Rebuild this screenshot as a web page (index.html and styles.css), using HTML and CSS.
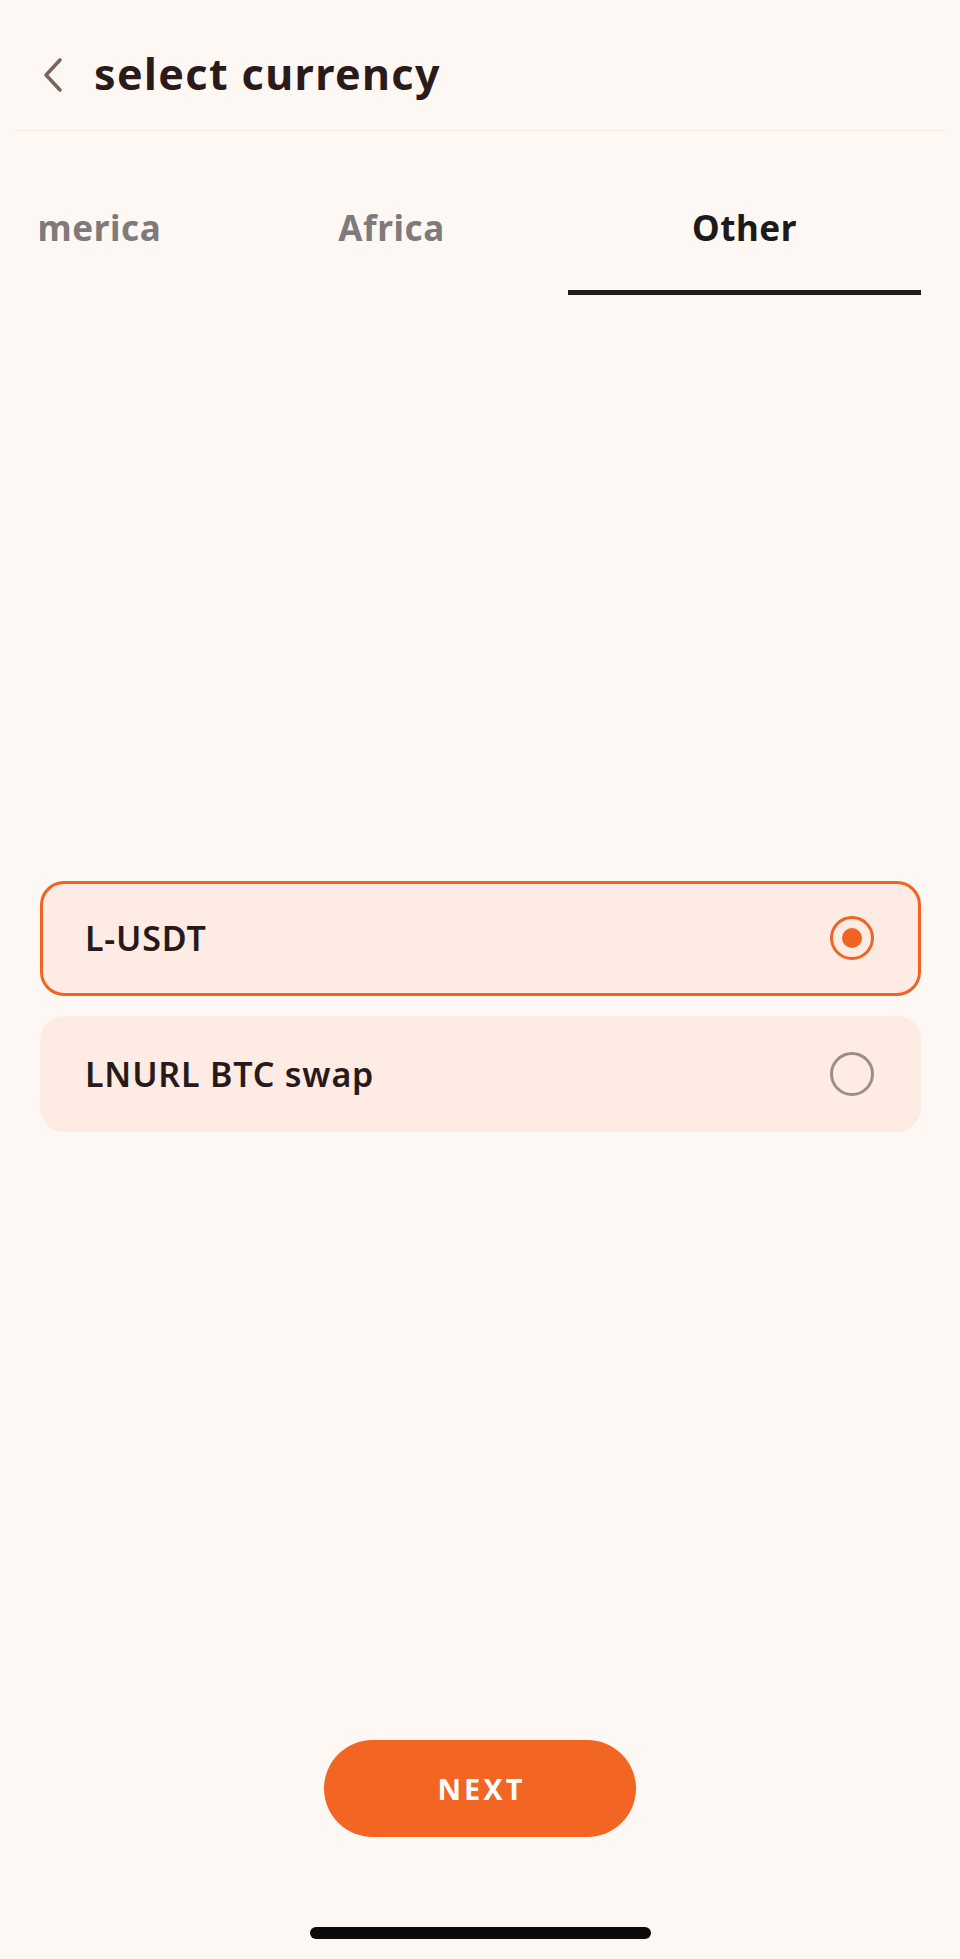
FILE: index.html
```html
<!DOCTYPE html>
<html lang="en">
<head>
<meta charset="utf-8">
<title>select currency</title>
<link rel="stylesheet" href="styles.css">
</head>
<body>
<div class="page">
  <header class="header">
    <button class="back" aria-label="Back">
      <svg width="22" height="36" viewBox="0 0 22 36"><path d="M18 3 L4 18 L18 33" fill="none" stroke="#7b6560" stroke-width="3.6" stroke-linecap="round" stroke-linejoin="round"/></svg>
    </button>
    <h1 class="title">select currency</h1>
  </header>
  <div class="divider"></div>
  <nav class="tabs">
    <div class="tab-strip">
      <div class="tab tab-first">America</div>
      <div class="tab">Africa</div>
      <div class="tab tab-active">Other</div>
    </div>
  </nav>
  <main class="content">
    <div class="options">
      <label class="option option-selected">
        <span class="option-label">L-USDT</span>
        <span class="radio radio-on"><span class="radio-dot"></span></span>
      </label>
      <label class="option">
        <span class="option-label">LNURL BTC swap</span>
        <span class="radio"></span>
      </label>
    </div>
  </main>
  <footer class="footer">
    <button class="next">NEXT</button>
    <div class="home-indicator"></div>
  </footer>
</div>
</body>
</html>
```

FILE: styles.css
```css
* { box-sizing: border-box; }
html, body { margin: 0; padding: 0; }
body {
  background: #fdf8f4;
  font-family: "Noto Sans", "Open Sans", sans-serif;
  color: #2a1b19;
}
.page {
  width: 960px;
  height: 1959px;
  display: flex;
  flex-direction: column;
  overflow: hidden;
}
.header {
  height: 110px;
  margin-top: 20px;
  display: flex;
  align-items: center;
  padding-left: 40px;
}
.back {
  background: none;
  border: 0;
  padding: 0;
  width: 26px;
  height: 36px;
  display: flex;
  align-items: center;
  justify-content: center;
  margin-right: 28px;
}
.back svg { display: block; }
.title {
  margin: 0;
  font-size: 43px;
  font-weight: 700;
  color: #2a1a19;
  letter-spacing: 1.4px;
  line-height: 1;
  padding-bottom: 4px;
}
.divider {
  height: 1px;
  background: #f8e5de;
  margin: 0 15px;
}
.tabs {
  margin: 0 39px 0 40px;
  overflow: hidden;
  height: 165px;
}
.tab-strip {
  display: flex;
  margin-left: -81px;
  height: 100%;
}
.tab {
  flex: 0 0 353px;
  display: flex;
  justify-content: center;
  padding-top: 79px;
  font-size: 35px;
  font-weight: 700;
  letter-spacing: 0.6px;
  color: #817a7a;
  line-height: 1;
}
.tab-first { flex-basis: 256px; }
.tab-active {
  color: #1c1a1a;
  border-bottom: 5px solid #1e1c1c;
  height: 164px;
}
.content {
  flex: 1;
  display: flex;
  flex-direction: column;
  justify-content: center;
  padding: 0 39px 24px 40px;
}
.options {
  display: flex;
  flex-direction: column;
  gap: 20px;
}
.option {
  height: 116px;
  background: #fdebe4;
  border-radius: 24px;
  border: 3px solid transparent;
  display: flex;
  align-items: center;
  justify-content: space-between;
  padding: 0 44px 0 42px;
}
.option-selected {
  border-color: #f26322;
  height: 115px;
}
.option-label {
  font-size: 34px;
  font-weight: 600;
  letter-spacing: 0.8px;
  color: #28191a;
}
.radio {
  width: 44px;
  height: 44px;
  border-radius: 50%;
  border: 3.5px solid #9b8f8b;
  display: flex;
  align-items: center;
  justify-content: center;
}
.radio-on { border-color: #f26322; }
.radio-dot {
  width: 20px;
  height: 20px;
  border-radius: 50%;
  background: #f26322;
}
.footer {
  display: flex;
  flex-direction: column;
  align-items: center;
  padding-bottom: 20px;
}
.next {
  width: 312px;
  height: 97px;
  border-radius: 49px;
  border: 0;
  background: #f36522;
  color: #fff;
  font-family: "Noto Sans", "Open Sans", sans-serif;
  font-size: 29px;
  font-weight: 700;
  letter-spacing: 3px;
  padding: 0 0 0 3px;
}
.home-indicator {
  margin-top: 90px;
  width: 341px;
  height: 12px;
  border-radius: 6px;
  background: #0b0b0b;
}
```
